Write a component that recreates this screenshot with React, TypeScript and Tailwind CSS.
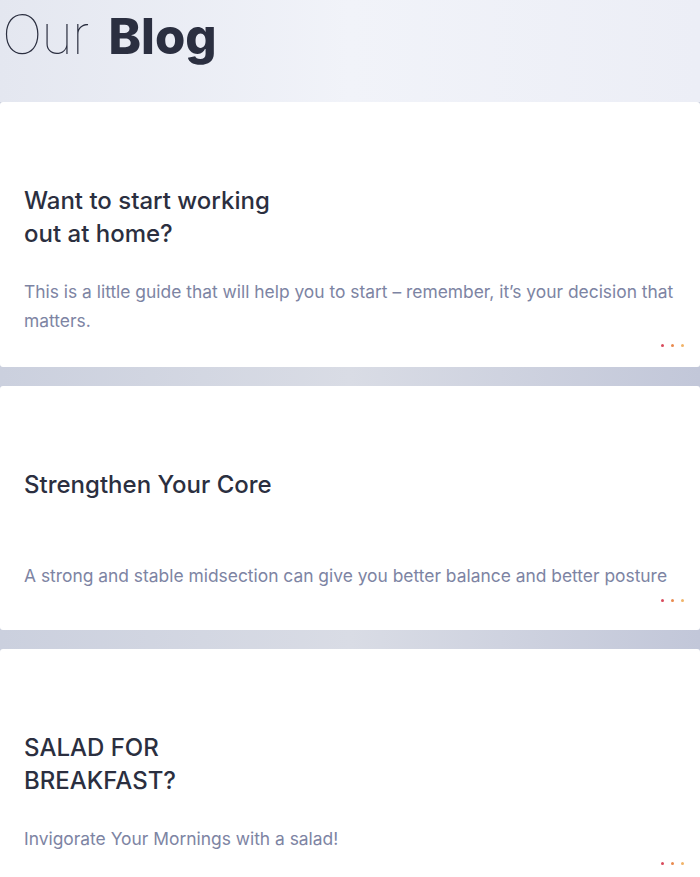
import React from 'react';

type Post = {
    title: string[];
    text: string;
    pad: string;
};

const posts: Post[] = [
    {
        title: ['Want to start working', 'out at home?'],
        text: 'This is a little guide that will help you to start \u2013 remember, it\u2019s your decision that matters.',
        pad: 'pb-[20px]'
    },
    {
        title: ['Strengthen Your Core'],
        text: 'A strong and stable midsection can give you better balance and better posture',
        pad: 'pb-[28px]'
    },
    {
        title: ['SALAD FOR', 'BREAKFAST?'],
        text: 'Invigorate Your Mornings with a salad!',
        pad: 'pb-[20px]'
    }
];

const Dots = () => (
    <div className="flex justify-end gap-[7px] pr-[16px]">
        <span className="w-[3px] h-[3px] rounded-full bg-[#d94a5c]" />
        <span className="w-[3px] h-[3px] rounded-full bg-[#e98a4e]" />
        <span className="w-[3px] h-[3px] rounded-full bg-[#f1b469]" />
    </div>
);

const Separator = () => (
    <div className="h-[19px] bg-gradient-to-r from-[#cbd0de] via-[#d9dce5] to-[#c2c7d9]" />
);

const PostCard = ({ post }: { post: Post }) => (
    <article className={`bg-white rounded-[3px] pt-[82px] ${post.pad}`}>
        <h2 className="min-h-[66px] px-[24px] text-[24px] leading-[33px] font-medium text-[#2b2f40]">
            {post.title.map((line, i) => (
                <div key={i}>{line}</div>
            ))}
        </h2>
        <p className="mt-[27px] px-[24px] text-[17.4px] leading-[29px] text-[#7d84a3]">{post.text}</p>
        <div className="mt-[9px]">
            <Dots />
        </div>
    </article>
);

export default function App() {
    return (
        <div className="w-[700px] h-[877px] overflow-hidden bg-[#c9cedc] font-['Inter',sans-serif]">
            {/* Header */}
            <header className="h-[102px] bg-gradient-to-r from-[#e4e7f0] via-[#f1f3f9] to-[#eceef6] pl-[2px]">
                <h1 className="flex items-baseline gap-[20px] leading-none pt-[8px] text-[#2b2f40]">
                    <span className="text-[54px] font-thin tracking-[-1px]">Our</span>
                    <span className="text-[49px] font-extrabold">Blog</span>
                </h1>
            </header>

            {posts.map((post, i) => (
                <div key={i}>
                    {i > 0 && <Separator />}
                    <PostCard post={post} />
                </div>
            ))}
        </div>
    );
}
